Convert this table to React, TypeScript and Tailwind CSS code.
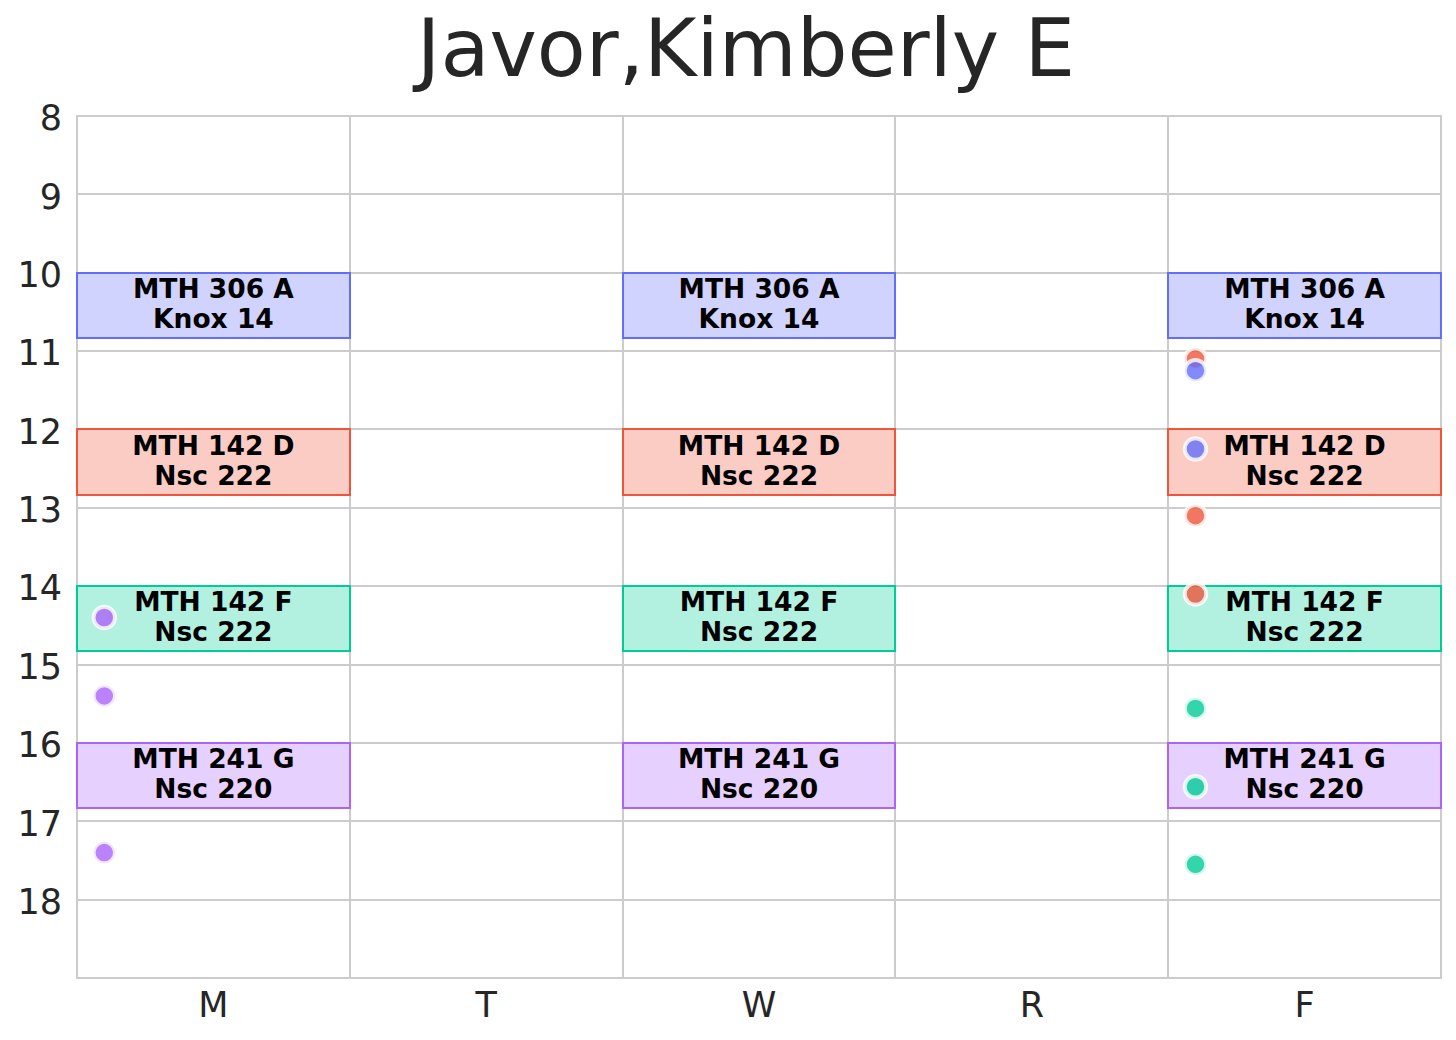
import React from "react";

const CP = 272.8; // column pitch
const HP = 862 / 11; // hour pitch
const DAYS = ["M", "T", "W", "R", "F"];
const HOURS = [8, 9, 10, 11, 12, 13, 14, 15, 16, 17, 18];

const COLORS: Record<string, { line: string; fill: string; dot: string }> = {
  blue: { line: "border-[#636efa]", fill: "bg-[#636efa4d]", dot: "#636efa" },
  red: { line: "border-[#ef553b]", fill: "bg-[#ef553b4d]", dot: "#ef553b" },
  green: { line: "border-[#00cc96]", fill: "bg-[#00cc964d]", dot: "#00cc96" },
  purple: { line: "border-[#ab63fa]", fill: "bg-[#ab63fa4d]", dot: "#ab63fa" },
};

const CLASSES = [
  { title: "MTH 306 A", room: "Knox 14", start: 10, color: "blue" },
  { title: "MTH 142 D", room: "Nsc 222", start: 12, color: "red" },
  { title: "MTH 142 F", room: "Nsc 222", start: 14, color: "green" },
  { title: "MTH 241 G", room: "Nsc 220", start: 16, color: "purple" },
];
const MEET_DAYS = [0, 2, 4];

const DOTS = [
  { col: 0, h: 14.4, color: "purple" },
  { col: 0, h: 15.4, color: "purple" },
  { col: 0, h: 17.4, color: "purple" },
  { col: 4, h: 11.1, color: "red" },
  { col: 4, h: 11.25, color: "blue" },
  { col: 4, h: 12.25, color: "blue" },
  { col: 4, h: 13.1, color: "red" },
  { col: 4, h: 14.1, color: "red" },
  { col: 4, h: 15.56, color: "green" },
  { col: 4, h: 16.56, color: "green" },
  { col: 4, h: 17.55, color: "green" },
];

export default function App() {
  return (
    <div className="w-[1456px] h-[1040px] bg-white text-[#262626] font-['DejaVu_Sans',sans-serif] overflow-hidden">
      <div className="h-[115px] pt-[9px] pl-[36px] flex justify-center">
        <h1 className="text-[80px] leading-[80px] font-normal whitespace-nowrap">Javor,Kimberly E</h1>
      </div>

      <div className="flex">
        <div className="relative w-[76px] h-[864px]">
          {HOURS.map((h) => (
            <div
              key={h}
              className="absolute right-[14px] text-[35px] leading-[35px]"
              style={{ top: 1 + (h - 8) * HP - 14.7 }}
            >
              {h}
            </div>
          ))}
        </div>

        <div className="relative w-[1366px] h-[864px]">
          <div className="grid grid-cols-5 grid-rows-11 gap-[2px] w-full h-full bg-[#cccccc] border-2 border-[#cccccc]">
            {Array.from({ length: 55 }).map((_, i) => (
              <div key={i} className="bg-white" />
            ))}
          </div>

          {MEET_DAYS.map((d) =>
            CLASSES.map((c) => (
              <div
                key={d + c.title}
                className={`absolute border-2 ${COLORS[c.color].line} ${COLORS[c.color].fill} flex flex-col items-center justify-center pb-[3px] text-black font-bold text-[26.5px] leading-[30px] whitespace-nowrap`}
                style={{ left: d * CP, top: (c.start - 8) * HP, width: CP + 2, height: (50 / 60) * HP + 2 }}
              >
                <span>{c.title}</span>
                <span>{c.room}</span>
              </div>
            ))
          )}

          <svg className="absolute inset-0 pointer-events-none" width={1366} height={864}>
            {DOTS.map((p, i) => (
              <circle
                key={i}
                cx={1 + p.col * CP + 0.1 * CP}
                cy={1 + (p.h - 8) * HP}
                r={10.75}
                fill={COLORS[p.color].dot}
                fillOpacity={0.8}
                stroke="#ffffff"
                strokeOpacity={0.8}
                strokeWidth={4}
              />
            ))}
          </svg>
        </div>
      </div>

      <div className="flex pl-[77px] mt-[9px]">
        {DAYS.map((d) => (
          <div key={d} className="w-[272.8px] text-center text-[35px] leading-[35px]">
            {d}
          </div>
        ))}
      </div>
    </div>
  );
}
